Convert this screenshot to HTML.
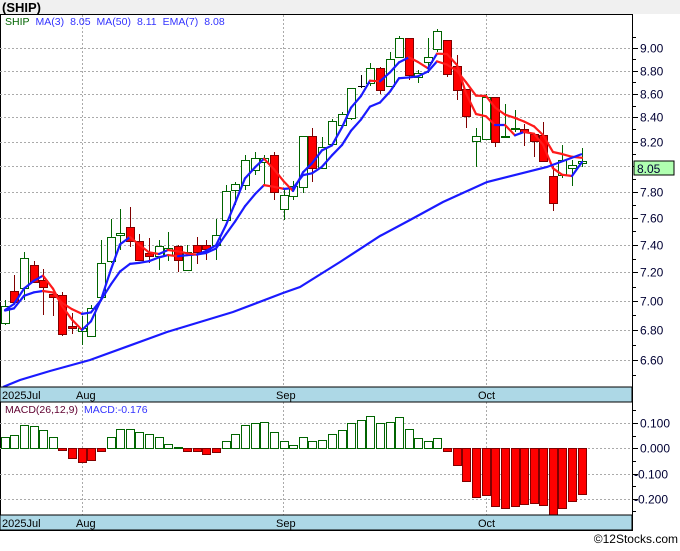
<!DOCTYPE html>
<html><head><meta charset="utf-8"><style>
html,body{margin:0;padding:0;background:#fff;}
body{width:680px;height:546px;overflow:hidden;font-family:"Liberation Sans",sans-serif;}
svg text{font-family:"Liberation Sans",sans-serif;}
</style></head><body>
<svg id="s" width="680" height="546" xmlns="http://www.w3.org/2000/svg">
<rect x="0" y="0" width="680" height="14" fill="#f0f0f0"/>
<text x="2" y="12" font-size="13" font-weight="bold" fill="#000">(SHIP)</text>
<rect x="0.5" y="14.5" width="632" height="516" fill="#fff" stroke="#000"/>
<g id="grid"></g>
<g id="cand"></g>
<g id="lines"></g>
<rect x="0" y="387" width="632" height="15" fill="#add8e6" stroke="#000"/>
<text x="2" y="399" font-size="11" fill="#000">2025Jul</text>
<text x="76" y="399" font-size="11" fill="#000">Aug</text>
<text x="276" y="399" font-size="11" fill="#000">Sep</text>
<text x="478" y="399" font-size="11" fill="#000">Oct</text>
<rect x="0" y="515" width="632" height="15" fill="#add8e6" stroke="#000"/>
<text x="2" y="527" font-size="11" fill="#000">2025Jul</text>
<text x="76" y="527" font-size="11" fill="#000">Aug</text>
<text x="276" y="527" font-size="11" fill="#000">Sep</text>
<text x="478" y="527" font-size="11" fill="#000">Oct</text>
<line x1="632.5" y1="14" x2="632.5" y2="531" stroke="#000"/>
<text x="5" y="25" font-size="10.5"><tspan fill="#006400">SHIP</tspan><tspan fill="#3333ff" dx="6">MA(3)</tspan><tspan fill="#3333ff" dx="6">8.05</tspan><tspan fill="#3333ff" dx="6">MA(50)</tspan><tspan fill="#3333ff" dx="6">8.11</tspan><tspan fill="#3333ff" dx="6">EMA(7)</tspan><tspan fill="#3333ff" dx="6">8.08</tspan></text>
<text x="5" y="413" font-size="10.5"><tspan fill="#600030">MACD(26,12,9)</tspan><tspan fill="#3333ff" dx="6">MACD:-0.176</tspan></text>
<g id="axis"></g>
<rect x="634" y="161" width="40" height="14" fill="#b0ffb0" stroke="#000"/>
<text x="637" y="173" font-size="12" fill="#000033">8.05</text>
<text x="678" y="543" font-size="12" fill="#000" text-anchor="end">©12Stocks.com</text>
</svg>
<script>
var NS="http://www.w3.org/2000/svg";
function el(p,t,a){var e=document.createElementNS(NS,t);for(var k in a)e.setAttribute(k,a[k]);p.appendChild(e);return e;}
var g=document.getElementById('grid'),c=document.getElementById('cand'),L=document.getElementById('lines'),ax=document.getElementById('axis');
function py(p){return 48+(Math.log(9)-Math.log(p))*1006;}
var levels=[9.0,8.8,8.6,8.4,8.2,7.8,7.6,7.4,7.2,7.0,6.8,6.6];
[9.0,8.8,8.6,8.4,8.2,8.0,7.8,7.6,7.4,7.2,7.0,6.8,6.6].forEach(function(p){var y=Math.round(py(p))+.5;
 el(g,'line',{x1:0,y1:y,x2:632,y2:y,stroke:'#aaa','stroke-dasharray':'2,2'});
 el(ax,'line',{x1:632,y1:y,x2:638,y2:y,stroke:'#000'});
 if(levels.indexOf(p)>=0&&p!=8.0){var t=el(ax,'text',{x:640,y:y+4,'font-size':12,fill:'#000033'});t.textContent=p.toFixed(2);}
});
for(var p=6.5;p<9.2;p+=0.2){var y=Math.round(py(p))+.5;if(y>16&&y<386)el(ax,'line',{x1:632,y1:y,x2:636,y2:y,stroke:'#000'});}
[82,283,486].forEach(function(x){el(g,'line',{x1:x+.5,y1:15,x2:x+.5,y2:387,stroke:'#aaa','stroke-dasharray':'2,2'});el(g,'line',{x1:x+.5,y1:402,x2:x+.5,y2:515,stroke:'#aaa','stroke-dasharray':'2,2'});});
[[423,'0.100'],[448,'0.000'],[474,'-0.100'],[499,'-0.200']].forEach(function(a){var y=a[0]+.5;
 el(g,'line',{x1:0,y1:y,x2:632,y2:y,stroke:'#aaa','stroke-dasharray':'2,2'});
 el(ax,'line',{x1:632,y1:y,x2:638,y2:y,stroke:'#000'});
 var t=el(ax,'text',{x:a[1][0]=='-'?634:640,y:y+4,'font-size':12,fill:'#000033'});t.textContent=a[1];});
[410,436,461,486,511].forEach(function(y){el(ax,'line',{x1:632,y1:y+.5,x2:636,y2:y+.5,stroke:'#000'});});
// candles: x, open y, close y, high y, low y
var C=[[5,323,306,300,325],[14,291,302,275,303],[24,288,258,252,300],[34,265,282,261,283],[43,280,287,269,315],[53,294,297,294,316],[62,295,334,292,336],[72,326,328,313,334],[82,331,328,316,345],[91,336,308,305,337],[101,297,263,240,298],[111,261,237,219,263],[120,235,233,209,250],[130,227,241,207,247],[139,241,260,234,261],[149,253,256,238,263],[159,256,246,240,270],[168,255,248,232,261],[178,246,260,245,272],[187,270,252,245,271],[197,245,252,237,264],[206,245,249,240,260],[216,245,235,219,260],[226,220,191,185,221],[235,190,184,182,205],[245,185,160,155,190],[255,170,158,152,175],[264,162,158,155,185],[274,155,192,152,200],[284,209,195,190,220],[293,196,186,181,200],[303,187,136,136,193],[312,136,168,128,182],[322,168,147,137,168],[332,144,121,119,146],[342,125,114,112,127],[351,118,88,88,120],[361,86,86,75,88],[370,83,68,63,86],[380,68,90,67,94],[390,86,59,52,87],[399,57,38,36,58],[409,38,75,38,80],[418,77,73,70,83],[428,62,57,38,73],[437,49,31,29,52],[447,40,74,40,77],[457,66,90,55,100],[466,89,116,89,128],[476,141,136,128,167],[486,139,97,94,140],[495,97,142,97,147],[505,137,136,104,137],[515,129,128,110,132],[524,129,132,124,146],[534,134,141,134,157],[543,135,161,122,162],[553,176,203,166,211],[562,175,160,145,178],[572,168,165,160,186],[582,163,161,148,167]];
C.forEach(function(d){var x=d[0],o=d[1],cl=d[2],up=cl<=o&&!(o==cl&&x==361);
 var col=x==361?'#000':(cl<o?'#006400':(cl>o?'#800000':'#006400'));
 var red=cl>o;
 el(c,'line',{x1:x+.5,y1:d[3],x2:x+.5,y2:d[4],stroke:col});
 var t=Math.min(o,cl),h=Math.max(1,Math.abs(o-cl));
 if(x==361){el(c,'line',{x1:x-3,y1:o+.5,x2:x+4,y2:o+.5,stroke:'#000'});return;}
 el(c,'rect',{x:x-3.5,y:t+.5,width:8,height:h,fill:red?'#ff0000':'#fff',stroke:col});
});
// moving averages on close y
var cy=C.map(function(d){return d[2];});
function seg(pts){for(var i=1;i<pts.length;i++){var a=pts[i-1],b=pts[i];el(L,'line',{x1:a[0],y1:a[1],x2:b[0],y2:b[1],stroke:b[1]<=a[1]?'#1a1aff':'#ff1a1a','stroke-width':2.2,'stroke-linecap':'round'});}}
var m3=[];for(var i=2;i<cy.length;i++){m3.push([C[i][0],(cy[i]+cy[i-1]+cy[i-2])/3]);}
m3.unshift([C[1][0],(cy[0]+cy[1])/2]);m3.unshift([C[0][0],cy[0]+4]);
var e=cy[0]+6,em=[],k=2/8;for(var i=0;i<cy.length;i++){e=cy[i]*k+e*(1-k);em.push([C[i][0],e]);}
seg(em);seg(m3);
var ma50=[[3,387],[20,380],[50,371],[90,360],[167,332],[233,312],[283,293],[300,287],[340,262],[380,236],[410,220],[443,202],[487,182],[547,167],[582,154]];
el(L,'polyline',{points:ma50.map(function(p){return p.join(',');}).join(' '),fill:'none',stroke:'#1a1aff','stroke-width':2.2});
// macd bars: top/bottom y
var M=[437,435,425,426,430,437,450,458,462,460,451,437,429,429,432,434,437,444,447,451,451,454,452,441,434,425,423,422,432,441,445,437,441,440,434,430,423,420,416,423,422,417,429,438,441,438,451,465,481,497,495,506,508,506,504,503,505,515,508,501,494];
for(var i=0;i<M.length&&i<C.length;i++){var x=C[i][0],v=M[i];
 if(v<448){el(c,'rect',{x:x-3.5,y:v+.5,width:8,height:448-v,fill:'#fff',stroke:'#006400'});}
 else{el(c,'rect',{x:x-3.5,y:448.5,width:8,height:Math.max(1,v-448),fill:'#ff0000',stroke:'#800000'});}}
</script>
</body></html>
